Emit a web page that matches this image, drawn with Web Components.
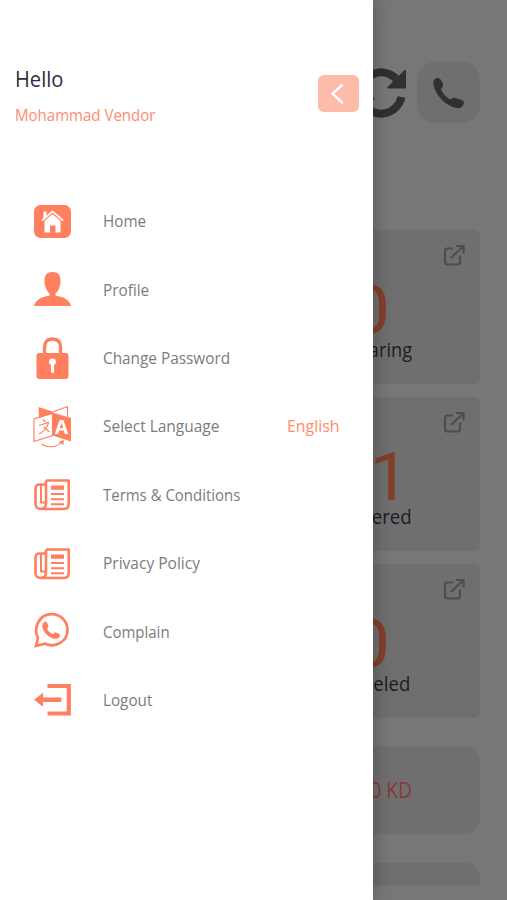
<!DOCTYPE html>
<html lang="en"><head><meta charset="utf-8"><title>Menu</title>
<style>
html,body{margin:0;height:100%;overflow:hidden;background:#777}
body{font-family:"Open Sans","Noto Sans",sans-serif}
</style></head><body>
<vendor-app></vendor-app>
<script>
const define=(name,html,init)=>customElements.define(name,class extends HTMLElement{
  constructor(){super();this.attachShadow({mode:'open'});}
  connectedCallback(){this.shadowRoot.innerHTML=typeof html==='function'?html(this):html;if(init)init(this);}
});

/* One line of text, condensed to the width given in `w`. */
define('fit-text',e=>`<style>:host{display:inline-block;width:${e.getAttribute('w')}px;white-space:nowrap}
span{display:inline-block;transform-origin:0 50%}</style><span><slot></slot></span>`,
e=>{const s=e.shadowRoot.querySelector('span');s.style.transform=`scaleX(${e.getAttribute('w')/s.offsetWidth})`;});

const paper=`<g fill="none" stroke="#ff7f5f" stroke-width="2.600" stroke-linejoin="round"><path d="M13 5.500H35.700V29q0 5-5 5H8Q2.500 34 2.500 28.500V14q0-4.500 4-4.500H13"/><path d="M13 5.500V28.500q0 5-4.500 5"/><path d="M8 10v17.500h5" stroke-width="2"/></g><path fill="#ff7f5f" d="M18 10.500h13v4.300H18zM18 18h13v2H18zM18 23.300h13v2H18zM18 28.300h13v2H18z"/>`;
const icons={
home:`<rect x="1" y="3" width="37" height="33" rx="6.500" fill="#ff7f5f"/><path fill="#fff" d="M10.500 9.500h3V14l-3 2.500zM11.500 19 19.500 12l8 7V30.500H22.500V23.500h-5.500v7H11.500z"/><path d="m9 18.600 10.500-9.200 10.700 9.200" fill="none" stroke="#fff" stroke-width="1.800"/>`,
profile:`<path fill="#ff7f5f" d="M19.500 2c5.500 0 8 3 8 8.500 0 6-2 10.500-5 13v2.200c8.500 1 14 4.300 15.500 10.300H1c1.500-6 7-9.300 15.500-10.300V23.500c-3-2.500-5-7-5-13 0-5.500 2.500-8.500 8-8.500z"/>`,
lock:`<path d="M11.500 16V8.500q0-8.500 8-8.500t8 8.500V16" fill="none" stroke="#ff7f5f" stroke-width="3.300"/><rect x="3.500" y="14" width="32" height="26" rx="3" fill="#ff7f5f"/><circle cx="19.500" cy="22.800" r="3.400" fill="#fff"/><path d="M19.500 24v8.500" stroke="#fff" stroke-width="3" stroke-linecap="round"/>`,
language:`<path fill="#ff7f5f" d="M5.500 0 19.500 4.500V7L6 11zM19.500 5.500 38 11v23.500L19.500 28.500z"/><path fill="none" stroke="#ff7f5f" stroke-width="1.100" d="M19.500 5.500 1 12v22.500L19.500 28.500zM19.500 5 34.500-.5v11M8.500 37c6 4 15 4 20-2"/><path fill="#ff7f5f" d="m25.500 35 5.500-2-.8 5z"/><text x="28.500" y="26.500" text-anchor="middle" font-family="Open Sans" font-size="19" font-weight="700" fill="#fff">A</text><path d="m10 12.500 2.500 2.500M6 18.500l9.500-3c-1 5-4.500 9-9.500 11.500M10.500 20l6 5" fill="none" stroke="#ff7f5f" stroke-width="1.200"/>`,
paper,
chat:`<path fill="none" stroke="#ff7f5f" stroke-width="2.700" stroke-linejoin="miter" d="M3 34 5 26C-.5 15 7 2.200 18.500 2.200c9 0 16 7 16 15.500 0 12-12 18.600-22.500 14z"/><path fill="#ff7f5f" d="M11 10.500c1.500-1.500 2.500-1 3.200.5l1.200 3c.3 1-1.500 2.500-1.100 3.200 1.200 2.300 3 4 5.500 5 1 .3 2-2.300 3.200-1.800l3.500 1.700c1 .5.600 2.500-.5 3.600-2.500 2-6.500 1.200-10-1.300-4-3-6.500-6.500-6.700-9.500-.1-2 .5-3.300 1.700-4.400z"/>`,
logout:`<path fill="none" stroke="#ff7f5f" stroke-width="4.200" d="M14.500 5H35.800V32.500H14.500"/><path fill="#ff7f5f" d="m1 18.800 9-7v4.800h18.300v4.400H10v4.800z"/>`};

define('menu-icon',e=>`<style>:host{display:block;width:39px;height:39px}svg{display:block;overflow:visible}</style>
<svg width="39" height="39" viewBox="0 0 39 39">${icons[e.getAttribute('name')]}</svg>`);

define('menu-item',e=>`<style>:host{display:flex;align-items:center;height:68.43px;padding:0 33.500px 0 33.200px;font-size:16px;color:#7c7c7c}
.l{margin-left:30.600px;flex:1}::slotted(*){color:#ff8b70}</style>
<menu-icon name="${e.getAttribute('icon')}"></menu-icon><div class="l"><fit-text w="${e.getAttribute('w')}">${e.getAttribute('label')}</fit-text></div><slot></slot>`);

define('back-button',`<style>:host{display:block;width:40.500px;height:37px;border-radius:6px;background:#ffbba9}svg{display:block}</style>
<svg width="40" height="37"><path d="m24 10-9.500 8.700L24 27.500" fill="none" stroke="#fff" stroke-width="2.400" stroke-linecap="round"/></svg>`);

define('side-drawer',`<style>:host{display:block;box-sizing:border-box;position:absolute;left:0;top:0;width:372.600px;height:900px;background:#fff;box-shadow:0 0 18px rgba(0,0,0,.28);padding-top:63px}
header{display:flex;justify-content:space-between;padding:0 14px 0 15px;height:124px}
.h{font-size:22px;line-height:30px;color:#2a2e3b}.n{font-size:16px;line-height:24px;margin-top:10px;color:#ff8b70}
back-button{margin-top:12px}</style>
<header><div><div class="h"><fit-text w="48.500">Hello</fit-text></div><div class="n"><fit-text w="140">Mohammad Vendor</fit-text></div></div><back-button></back-button></header>
<nav>
<menu-item icon="home" label="Home" w="43"></menu-item>
<menu-item icon="profile" label="Profile" w="46"></menu-item>
<menu-item icon="lock" label="Change Password" w="127.500"></menu-item>
<menu-item icon="language" label="Select Language" w="116"><fit-text w="52.500">English</fit-text></menu-item>
<menu-item icon="paper" label="Terms &amp; Conditions" w="137.500"></menu-item>
<menu-item icon="paper" label="Privacy Policy" w="97"></menu-item>
<menu-item icon="chat" label="Complain" w="66.500"></menu-item>
<menu-item icon="logout" label="Logout" w="49.500"></menu-item>
</nav>`);

define('stat-card',e=>`<style>:host{display:block;position:relative;height:154px;border-radius:6px;background:#6f6f6f;text-align:center}
.v{font-family:Roboto,sans-serif;font-size:66px;line-height:80px;padding:41px 9px 0 0;height:66px;color:#843f2b}
.t{font-size:20px;line-height:26px;color:#1b1d24;padding-right:3px}
svg{position:absolute;right:15px;top:14px}</style>
<svg width="22" height="22" fill="none" stroke="#4e4e4e" stroke-width="2.200"><path d="M10 4.500H4.500Q2 4.500 2 7v11q0 2.500 2.500 2.500H14.500q2.500 0 2.500-2.500v-6.500M8 14 19.500 3M13 2h7.500v7.500"/></svg>
<div class="v"><fit-text w="${e.getAttribute('vw')}">${e.getAttribute('value')}</fit-text></div><div class="t"><fit-text w="${e.getAttribute('w')}">${e.getAttribute('label')}</fit-text></div>`);

define('top-actions',`<style>:host{display:flex;align-items:center;justify-content:flex-end;gap:11px;height:61px}
.p{width:63px;height:61px;border-radius:18px;background:#6f6f6f}svg{display:block}</style>
<svg width="50" height="50" viewBox="0 0 50 50"><path d="M4.500 21A21 21 0 0 1 42 13M45.500 29A21 21 0 0 1 8 37" fill="none" stroke="#303030" stroke-width="8"/><path fill="#303030" stroke="#303030" stroke-linejoin="round" stroke-width="2" d="M49 3V19.500H32.500zM1 47V30.500h16.500z"/></svg>
<div class="p"><svg width="63" height="61"><path fill="#303030" d="M17.500 17.500c3-2.500 5-1.500 6.500.5l2 4c.8 2-.8 3.200-2 5 1.500 4.500 5.500 8.500 9.500 10.500 1.500-1 3-2 5-1.500l5.500 1.700c2.500 1 3.700 2.300 2.300 5-1.300 3-4 4-7 3.300C28.500 43.500 19.500 34.500 16.700 23.500c-.7-2.500-.7-4.500.8-6z"/></svg></div>`);

define('vendor-app',`<style>:host{display:block;position:relative;width:507px;height:900px;overflow:hidden;background:#777}
main{padding:62px 27px 0 263px}.cards{display:grid;gap:13px;margin-top:107px}
.sum{margin-top:28px;height:88px;border-radius:16px;background:#6f6f6f;display:grid;place-items:center;font-size:21px;color:#853a32}
.next{margin-top:29px;height:23px;border-radius:14px 14px 0 0;background:#6f6f6f}</style>
<main><top-actions></top-actions><div class="cards">
<stat-card value="0" vw="42" label="Preparing" w="83"></stat-card>
<stat-card value="11" vw="79" label="Delivered" w="83"></stat-card>
<stat-card value="0" vw="42" label="Canceled" w="79"></stat-card></div>
<div class="sum"><fit-text w="80">0.000 KD</fit-text></div><div class="next"></div></main>
<side-drawer></side-drawer>`);
</script></body></html>
